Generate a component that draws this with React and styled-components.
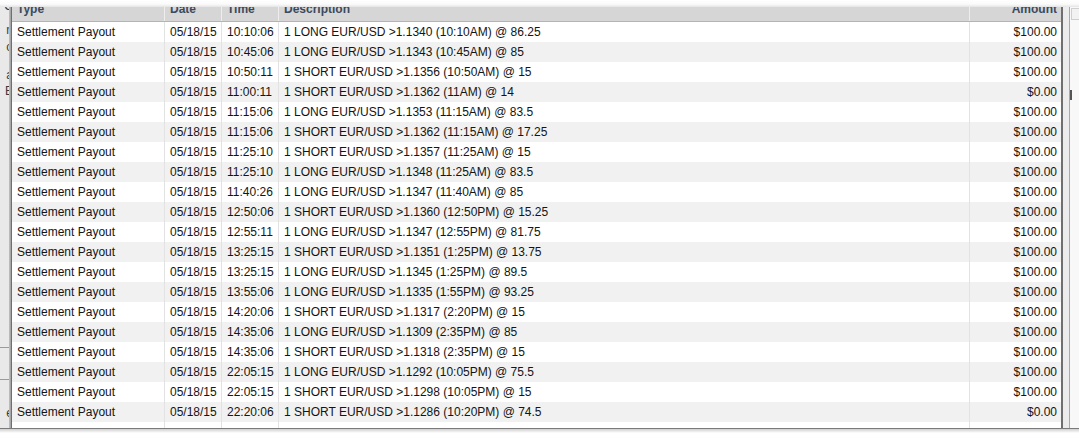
import React from "react";
import styled, { createGlobalStyle } from "styled-components";

const GlobalStyle = createGlobalStyle({
  "html, body": {
    margin: 0,
    padding: 0,
    background: "#ffffff",
    overflow: "hidden",
  },
  body: {
    fontFamily: '"Liberation Sans", Arial, sans-serif',
  },
});

const rows = [
  ["10:10:06", "1 LONG EUR/USD >1.1340 (10:10AM) @ 86.25", "$100.00"],
  ["10:45:06", "1 LONG EUR/USD >1.1343 (10:45AM) @ 85", "$100.00"],
  ["10:50:11", "1 SHORT EUR/USD >1.1356 (10:50AM) @ 15", "$100.00"],
  ["11:00:11", "1 SHORT EUR/USD >1.1362 (11AM) @ 14", "$0.00"],
  ["11:15:06", "1 LONG EUR/USD >1.1353 (11:15AM) @ 83.5", "$100.00"],
  ["11:15:06", "1 SHORT EUR/USD >1.1362 (11:15AM) @ 17.25", "$100.00"],
  ["11:25:10", "1 SHORT EUR/USD >1.1357 (11:25AM) @ 15", "$100.00"],
  ["11:25:10", "1 LONG EUR/USD >1.1348 (11:25AM) @ 83.5", "$100.00"],
  ["11:40:26", "1 LONG EUR/USD >1.1347 (11:40AM) @ 85", "$100.00"],
  ["12:50:06", "1 SHORT EUR/USD >1.1360 (12:50PM) @ 15.25", "$100.00"],
  ["12:55:11", "1 LONG EUR/USD >1.1347 (12:55PM) @ 81.75", "$100.00"],
  ["13:25:15", "1 SHORT EUR/USD >1.1351 (1:25PM) @ 13.75", "$100.00"],
  ["13:25:15", "1 LONG EUR/USD >1.1345 (1:25PM) @ 89.5", "$100.00"],
  ["13:55:06", "1 LONG EUR/USD >1.1335 (1:55PM) @ 93.25", "$100.00"],
  ["14:20:06", "1 SHORT EUR/USD >1.1317 (2:20PM) @ 15", "$100.00"],
  ["14:35:06", "1 LONG EUR/USD >1.1309 (2:35PM) @ 85", "$100.00"],
  ["14:35:06", "1 SHORT EUR/USD >1.1318 (2:35PM) @ 15", "$100.00"],
  ["22:05:15", "1 LONG EUR/USD >1.1292 (10:05PM) @ 75.5", "$100.00"],
  ["22:05:15", "1 SHORT EUR/USD >1.1298 (10:05PM) @ 15", "$100.00"],
  ["22:20:06", "1 SHORT EUR/USD >1.1286 (10:20PM) @ 74.5", "$0.00"],
];

// bits of the window behind the dialog, peeking out on the left
const backdrop = [
  { kind: "ch", gap: -1, ch: "C" },
  { kind: "ch", gap: 10, ch: "n" },
  { kind: "ch", gap: 3, ch: "o" },
  { kind: "ch", gap: 14, ch: "a" },
  { kind: "ch", gap: 2, ch: "E" },
  { kind: "ch", gap: 18, ch: "i" },
  { kind: "rule", gap: 217 },
  { kind: "rule", gap: 31 },
  { kind: "ch", gap: 26, ch: "e" },
];

const COLS = "153px 57px 57px 691px 91px";

function App() {
  return (
    <>
      <GlobalStyle />
      <Screen>
        <TopBand />
        <Middle>
          <Backdrop>
            {backdrop.map((b, i) =>
              b.kind === "ch" ? (
                <Peek key={i} $gap={b.gap}>
                  {b.ch}
                </Peek>
              ) : (
                <BackdropRule key={i} $gap={b.gap} />
              )
            )}
          </Backdrop>
          <Shade />
          <Window>
            <HeaderRow>
              <HeadCell>Type</HeadCell>
              <HeadCell>Date</HeadCell>
              <HeadCell>Time</HeadCell>
              <HeadCell>Description</HeadCell>
              <HeadCell $right>Amount</HeadCell>
            </HeaderRow>
            {rows.map((r, i) => (
              <Row key={i} $alt={i % 2 === 1}>
                <Cell>Settlement Payout</Cell>
                <Cell>05/18/15</Cell>
                <Cell>{r[0]}</Cell>
                <Cell>{r[1]}</Cell>
                <Cell $right>{r[2]}</Cell>
              </Row>
            ))}
            <Filler>
              <Cell />
              <Cell />
              <Cell />
              <Cell />
              <Cell $right />
            </Filler>
          </Window>
          <SidePanel>
            <SideGutter />
            <SideEdge />
            <SideTrack>
              <SideButton />
              <Grip />
            </SideTrack>
          </SidePanel>
        </Middle>
        <BottomEdge />
        <BottomShadow />
      </Screen>
    </>
  );
}

const Screen = styled.div({
  width: "1079px",
  height: "438px",
  display: "flex",
  flexDirection: "column",
  background: "#ffffff",
  overflow: "hidden",
});

const TopBand = styled.div({
  height: "7px",
  flexShrink: 0,
  background: "linear-gradient(#ffffff 0%, #fafafa 60%, #e4e4e4 100%)",
  position: "relative",
  zIndex: 2,
});

const Middle = styled.div({
  height: "421px",
  display: "flex",
  flexShrink: 0,
});

const Backdrop = styled.div({
  width: "9px",
  background: "#e9e9e9",
  display: "flex",
  flexDirection: "column",
  alignItems: "flex-end",
  overflow: "hidden",
  marginTop: "-7px",
});

const Peek = styled.span(({ $gap }) => ({
  marginTop: `${$gap}px`,
  height: "14px",
  fontSize: "12px",
  lineHeight: "14px",
  color: "#3a3a3a",
  marginRight: "-4px",
}));

const BackdropRule = styled.div(({ $gap }) => ({
  marginTop: `${$gap}px`,
  alignSelf: "stretch",
  height: "1px",
  background: "#9a9a9a",
}));

const Shade = styled.div({
  width: "2px",
  background: "linear-gradient(90deg, #c4c4c4, #9c9c9c)",
});

const Window = styled.div({
  width: "1049px",
  borderLeft: "1px solid #6f6f6f",
  borderRight: "2px solid #6f6f6f",
  display: "flex",
  flexDirection: "column",
  overflow: "hidden",
  background: "#ffffff",
  fontFamily: '"Liberation Sans", Arial, sans-serif',
  fontSize: "12px",
});

const HeaderRow = styled.div({
  display: "grid",
  gridTemplateColumns: COLS,
  height: "24px",
  marginTop: "-10px",
  flexShrink: 0,
  background: "#d6d6d6",
  borderBottom: "1px solid #a3b8c8",
});

const HeadCell = styled.div(({ $right }) => ({
  lineHeight: "24px",
  padding: $right ? "0 4px 0 0" : "0 0 0 5px",
  textAlign: $right ? "right" : "left",
  fontWeight: "bold",
  color: "#3c4a5c",
  borderRight: $right ? "none" : "1px solid #eeeeee",
  whiteSpace: "nowrap",
  overflow: "hidden",
}));

const Row = styled.div(({ $alt }) => ({
  display: "grid",
  gridTemplateColumns: COLS,
  height: "20px",
  flexShrink: 0,
  background: $alt ? "#f1f1f1" : "#ffffff",
}));

const Filler = styled.div({
  display: "grid",
  gridTemplateColumns: COLS,
  flex: 1,
  background: "#ffffff",
});

const Cell = styled.div(({ $right }) => ({
  lineHeight: "20px",
  padding: $right ? "0 4px 0 0" : "0 0 0 5px",
  textAlign: $right ? "right" : "left",
  color: "#141414",
  borderRight: $right ? "none" : "1px solid #e2e2e2",
  whiteSpace: "nowrap",
  overflow: "hidden",
}));

const SidePanel = styled.div({
  flex: 1,
  display: "flex",
  marginTop: "-7px",
});

const SideGutter = styled.div({
  width: "6px",
  background: "#ececec",
});

const SideEdge = styled.div({
  width: "1px",
  background: "#a9a9a9",
});

const SideTrack = styled.div({
  flex: 1,
  background: "#f8f8f8",
  display: "flex",
  flexDirection: "column",
});

const SideButton = styled.div({
  marginTop: "8px",
  marginLeft: "1px",
  height: "10px",
  border: "1px solid #cfcfcf",
  borderRight: "none",
  background: "#f2f2f2",
});

const Grip = styled.div({
  marginTop: "70px",
  width: "2px",
  height: "10px",
  background: "#555",
});

const BottomEdge = styled.div({
  height: "1px",
  flexShrink: 0,
  background: "#7a7a7a",
});

const BottomShadow = styled.div({
  height: "4px",
  flexShrink: 0,
  background: "linear-gradient(#cfcfcf, #ffffff)",
});

export default App;
